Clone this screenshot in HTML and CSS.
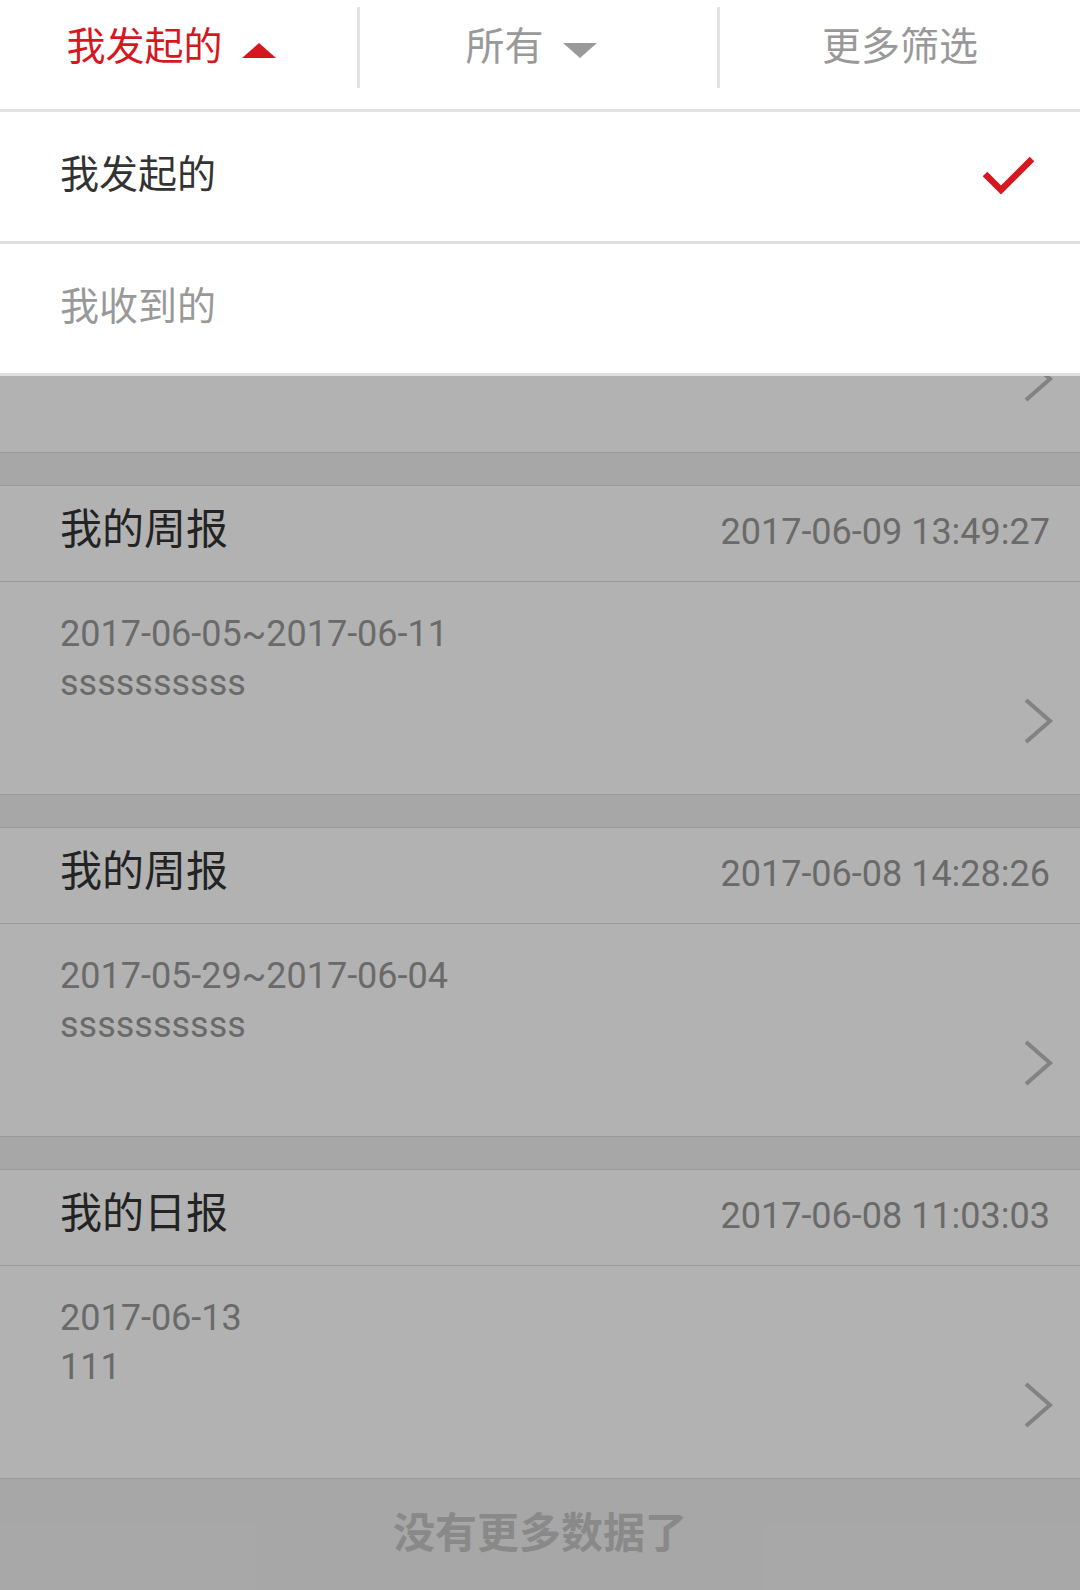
FILE: index.html
```html
<!DOCTYPE html>
<html lang="zh-CN">
<head>
<meta charset="utf-8">
<title>报告列表</title>
<link rel="stylesheet" href="styles.css">
</head>
<body>
<div class="page">
  <header class="tabs">
    <div class="tab tab-active">
      <span>我发起的</span>
      <svg class="caret" width="34" height="15" viewBox="0 0 34 15"><polygon points="0,15 17,0 34,15" fill="#d7171f"/></svg>
    </div>
    <div class="tab">
      <span>所有</span>
      <svg class="caret" width="34" height="15" viewBox="0 0 34 15"><polygon points="0,0 34,0 17,15" fill="#999999"/></svg>
    </div>
    <div class="tab tab-last">
      <span>更多筛选</span>
    </div>
  </header>

  <main class="list">
    <section class="card card-partial">
      <div class="card-body">
        <div class="body-text"></div>
        <svg class="chev" width="30" height="48" viewBox="0 0 30 48"><polyline points="2,3 26,24 2,45" fill="none" stroke="#bbbbbb" stroke-width="4"/></svg>
      </div>
    </section>

    <section class="card">
      <div class="card-head">
        <span class="card-title">我的周报</span>
        <span class="card-time">2017-06-09 13:49:27</span>
      </div>
      <div class="card-body">
        <div class="body-text">
          <div>2017-06-05~2017-06-11</div>
          <div>ssssssssss</div>
        </div>
        <svg class="chev" width="30" height="48" viewBox="0 0 30 48"><polyline points="2,3 26,24 2,45" fill="none" stroke="#bbbbbb" stroke-width="4"/></svg>
      </div>
    </section>

    <section class="card">
      <div class="card-head">
        <span class="card-title">我的周报</span>
        <span class="card-time">2017-06-08 14:28:26</span>
      </div>
      <div class="card-body">
        <div class="body-text">
          <div>2017-05-29~2017-06-04</div>
          <div>ssssssssss</div>
        </div>
        <svg class="chev" width="30" height="48" viewBox="0 0 30 48"><polyline points="2,3 26,24 2,45" fill="none" stroke="#bbbbbb" stroke-width="4"/></svg>
      </div>
    </section>

    <section class="card card-last">
      <div class="card-head">
        <span class="card-title">我的日报</span>
        <span class="card-time">2017-06-08 11:03:03</span>
      </div>
      <div class="card-body">
        <div class="body-text">
          <div>2017-06-13</div>
          <div>111</div>
        </div>
        <svg class="chev" width="30" height="48" viewBox="0 0 30 48"><polyline points="2,3 26,24 2,45" fill="none" stroke="#bbbbbb" stroke-width="4"/></svg>
      </div>
    </section>

    <div class="no-more">没有更多数据了</div>
  </main>

  <div class="overlay">
    <div class="dropdown">
      <div class="option option-selected">
        <span>我发起的</span>
        <svg width="56" height="44" viewBox="0 0 56 44"><polyline points="5,22 21,38 52,7" fill="none" stroke="#d7171f" stroke-width="6.5"/></svg>
      </div>
      <div class="option">
        <span>我收到的</span>
      </div>
    </div>
    <div class="mask"></div>
  </div>
</div>
</body>
</html>
```

FILE: styles.css
```css
* {
  box-sizing: border-box;
}

html, body {
  margin: 0;
  padding: 0;
  background: #ffffff;
}

body {
  font-family: Roboto, "Noto Sans CJK SC", sans-serif;
}

.page {
  position: relative;
  width: 1080px;
  height: 1590px;
  overflow: hidden;
  background: #f0f0f0;
}

/* ---------- top tabs ---------- */
.tabs {
  display: grid;
  grid-template-columns: repeat(3, 1fr);
  height: 112px;
  background: #ffffff;
  border-bottom: 3px solid #e3e3e3;
}

.tab {
  height: 81px;
  margin-top: 7px;
  display: flex;
  align-items: center;
  justify-content: center;
  gap: 19px;
  padding-right: 15px;
  border-right: 3px solid #e3e3e3;
  font-size: 39px;
  color: #999999;
  line-height: 1;
}

.tab-active {
  color: #d7171f;
}

.tab-last {
  border-right: none;
  padding-right: 0;
}

.caret {
  display: block;
  margin-top: 6px;
}

/* ---------- list ---------- */
.list {
  display: flex;
  flex-direction: column;
}

.card {
  background: #ffffff;
  border-top: 1px solid #dddddd;
  border-bottom: 1px solid #dddddd;
  margin-bottom: 32px;
}

.card-partial {
  border-top: none;
}

.card-head {
  height: 96px;
  display: flex;
  align-items: center;
  justify-content: space-between;
  padding: 0 30px 0 60px;
  border-bottom: 1px solid #dddddd;
}

.card-title {
  font-size: 42px;
  color: #333333;
  line-height: 1;
  margin-bottom: 8px;
}

.card-time {
  font-size: 36px;
  color: #999999;
  line-height: 1;
  margin-bottom: 4px;
}

.card-body {
  height: 212px;
  display: flex;
  justify-content: space-between;
}

.card-partial .card-body {
  height: 340px;
}

.body-text {
  padding: 28px 0 0 60px;
  font-size: 36px;
  line-height: 49px;
  color: #999999;
}

.chev {
  display: block;
  align-self: flex-end;
  margin: 0 26px 49px 0;
}

.card-last {
  margin-bottom: 0;
}

.no-more {
  height: 111px;
  display: flex;
  align-items: center;
  justify-content: center;
  padding-bottom: 11px;
  font-size: 42px;
  font-weight: 700;
  color: #c5c5c5;
  background: #f0f0f0;
}

/* ---------- dropdown overlay ---------- */
.overlay {
  position: absolute;
  top: 112px;
  left: 0;
  right: 0;
  bottom: 0;
  display: flex;
  flex-direction: column;
}

.dropdown {
  background: #ffffff;
}

.option {
  height: 132px;
  display: flex;
  align-items: center;
  justify-content: space-between;
  padding: 0 44px 3px 60px;
  border-bottom: 3px solid #dedede;
  font-size: 39px;
  color: #999999;
  line-height: 1;
}

.option-selected {
  color: #333333;
}

.option svg {
  display: block;
  margin-bottom: 2px;
}

.mask {
  flex: 1;
  background: rgba(0, 0, 0, 0.3);
}
```
